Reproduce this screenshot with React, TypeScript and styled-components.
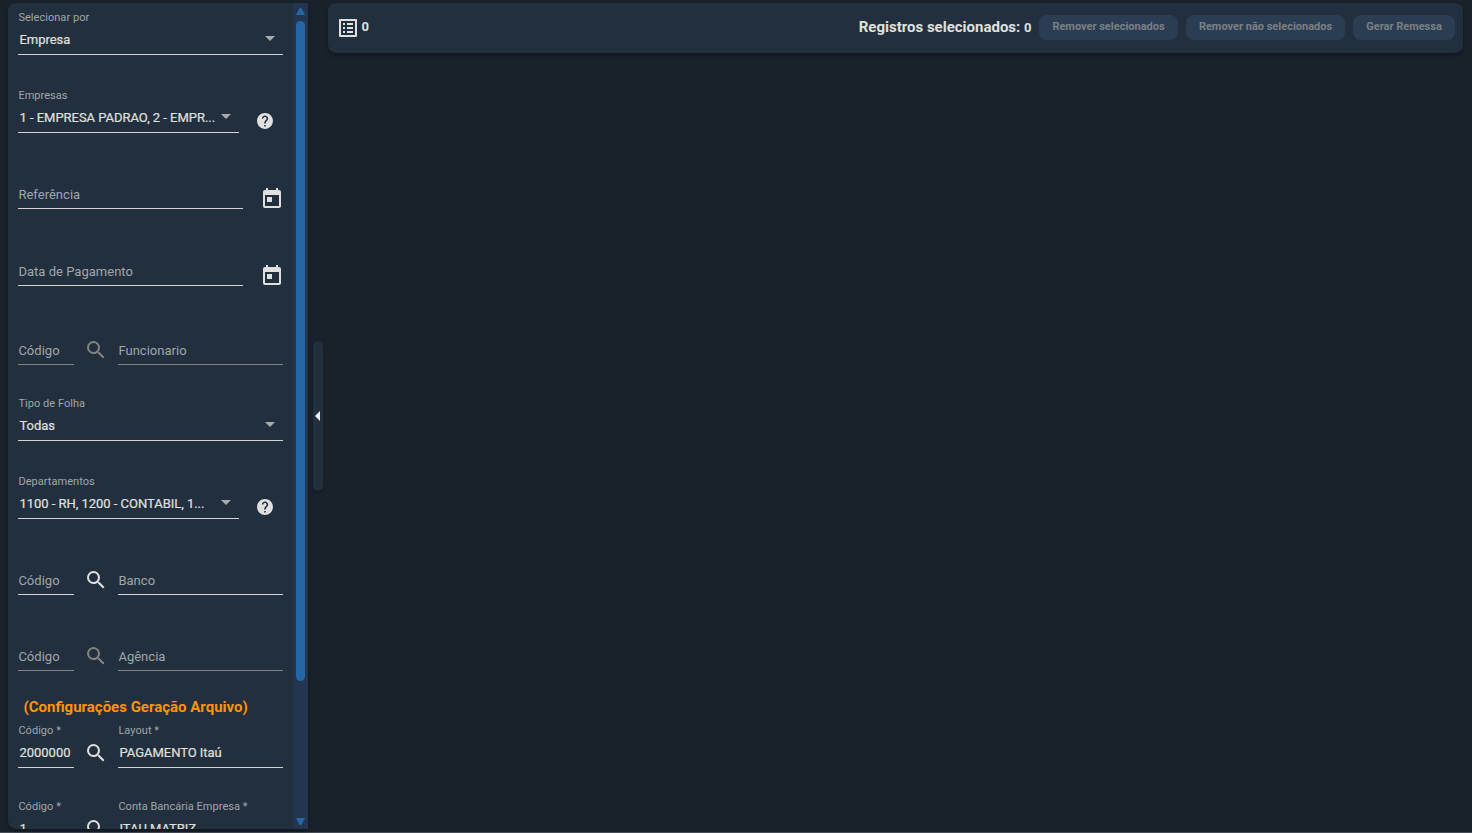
import React from "react";
import styled, { createGlobalStyle } from "styled-components";
import { MdHelp, MdListAlt, MdSearch, MdToday } from "react-icons/md";

const GlobalStyle = createGlobalStyle`
  * { box-sizing: border-box; }
  body {
    margin: 0;
    background: #19222b;
    font-family: Roboto, "Open Sans", sans-serif;
    overflow: hidden;
  }
`;

const Page = styled.div`
  display: flex;
  height: 833px;
  padding: 3px 9px 0 8px;
  border-bottom: 1px solid #464d55;
  color: #e0e0de;
`;

const Sidebar = styled.aside`
  display: flex;
  width: 300px;
  height: 826px;
  flex: none;
  overflow: hidden;
  border-radius: 8px 0 0 8px;
  background: #212f3f;
  box-shadow: 0 2px 4px rgba(0, 0, 0, 0.35);
`;

const Filters = styled.form`
  width: 285px;
  height: 826px;
  padding-left: 10px;
  overflow: hidden;
`;

const Row = styled.div<{ $height: number }>`
  display: flex;
  align-items: flex-end;
  height: ${(p) => p.$height}px;
`;

const FieldBox = styled.div<{ $width: number; $disabled?: boolean }>`
  display: flex;
  flex: none;
  flex-direction: column;
  justify-content: flex-end;
  width: ${(p) => p.$width}px;
  border-bottom: 1px solid ${(p) => (p.$disabled ? "#85837f" : "#d4d3d0")};
`;

const FloatingLabel = styled.label`
  height: 15px;
  padding-left: 0.4px;
  font-size: 11px;
  line-height: 15px;
  letter-spacing: 0.04px;
  color: #a3a6a9;
  white-space: nowrap;
`;

const EmptyLabel = styled.label`
  height: 27px;
  padding-left: 0.4px;
  font-size: 13px;
  line-height: 28px;
  color: #a3a6a9;
  letter-spacing: 0.02px;
  white-space: nowrap;
`;

const ValueLine = styled.div`
  display: flex;
  align-items: center;
  justify-content: space-between;
  height: 29px;
  padding: 0 8px 0 1.5px;
`;

const Value = styled.span`
  font-size: 13px;
  line-height: 29px;
  letter-spacing: -0.03px;
  white-space: nowrap;
  -webkit-text-stroke: 0.2px currentColor;
`;

const Caret = styled.i`
  width: 0;
  height: 0;
  margin-bottom: 3px;
  border: 5px solid transparent;
  border-top-color: #a9abab;
  border-bottom: 0;
`;

const IconSlot = styled.span<{ $left: number; $drop?: number; $dim?: boolean }>`
  display: flex;
  flex: none;
  margin: 0 0 ${(p) => -(p.$drop ?? 0)}px ${(p) => p.$left}px;
  color: ${(p) => (p.$dim ? "#828382" : "#e0e0de")};
`;

const LookupSlot = styled(IconSlot)`
  margin-right: 10px;
`;

const SectionTitle = styled.h2`
  height: 26px;
  margin: 0;
  padding: 21px 0 0 5.5px;
  color: #ff9408;
  font-size: 15px;
  font-weight: 700;
  line-height: 30px;
  white-space: nowrap;
`;

const ScrollTrack = styled.div`
  display: flex;
  flex-direction: column;
  align-items: center;
  width: 15px;
  height: 826px;
  padding: 5px 0 4px;
  background: #24364f;
`;

const ScrollArrow = styled.i<{ $down?: boolean }>`
  width: 9px;
  height: 7px;
  background: #2466a6;
  clip-path: ${(p) =>
    p.$down ? "polygon(0 0, 100% 0, 60% 100%, 40% 100%)" : "polygon(40% 0, 60% 0, 100% 100%, 0 100%)"};
`;

const ScrollThumb = styled.div`
  width: 9px;
  height: 660px;
  margin: 6px 0 auto;
  border-radius: 5px;
  background: #2466a6;
`;

const CollapseHandle = styled.button`
  display: flex;
  align-items: center;
  align-self: flex-start;
  flex: none;
  width: 10px;
  height: 150px;
  margin: 338px 5px 0;
  padding: 0 0 0 2px;
  border: 0;
  border-radius: 5px;
  background: #212f3f;
  box-shadow: 0 1px 2px rgba(0, 0, 0, 0.3);
`;

const CollapseArrow = styled.i`
  border: 5px solid transparent;
  border-right-color: #f0f0ee;
  border-left: 0;
`;

const Toolbar = styled.header`
  display: flex;
  flex: 1;
  align-items: center;
  height: 50px;
  padding: 0 8px;
  border-radius: 8px;
  background: #212f3f;
  box-shadow: 0 2px 4px rgba(0, 0, 0, 0.35);
`;

const Count = styled.b`
  margin: 0 auto 3px 1.5px;
  font-size: 13px;
`;

const Summary = styled.b`
  margin-right: -0.5px;
  padding-bottom: 2px;
  font-size: 15px;
  white-space: nowrap;
`;

const SummaryCount = styled.span`
  font-size: 13px;
`;

const ActionButton = styled.button<{ $width: number }>`
  flex: none;
  width: ${(p) => p.$width}px;
  height: 25px;
  margin: 0 0 1px 8px;
  padding: 0 0 2px;
  border: 0;
  border-radius: 8px;
  background: #2a3d53;
  color: #7b8085;
  font: 700 11px Roboto, sans-serif;
  white-space: nowrap;
`;

type FieldProps = {
  label: string;
  value?: string;
  width: number;
  select?: boolean;
  disabled?: boolean;
};

function Field({ label, value, width, select, disabled }: FieldProps) {
  return (
    <FieldBox $width={width} $disabled={disabled}>
      {value ? (
        <>
          <FloatingLabel>{label}</FloatingLabel>
          <ValueLine>
            <Value>{value}</Value>
            {select && <Caret />}
          </ValueLine>
        </>
      ) : (
        <EmptyLabel>{label}</EmptyLabel>
      )}
    </FieldBox>
  );
}

type LookupProps = {
  height: number;
  codeLabel?: string;
  code?: string;
  label: string;
  value?: string;
  disabled?: boolean;
};

function Lookup({ height, codeLabel = "Código", code, label, value, disabled }: LookupProps) {
  return (
    <Row $height={height}>
      <Field label={codeLabel} value={code} width={56} disabled={disabled} />
      <LookupSlot $left={10} $drop={-3} $dim={disabled}>
        <MdSearch size={24} />
      </LookupSlot>
      <Field label={label} value={value} width={165} disabled={disabled} />
    </Row>
  );
}

function MultiSelect({ label, value }: { label: string; value: string }) {
  return (
    <Row $height={78}>
      <Field label={label} value={value} width={221} select />
      <IconSlot $left={16} $drop={-2}>
        <MdHelp size={20} viewBox="-0.6 -0.6 25.2 25.2" />
      </IconSlot>
    </Row>
  );
}

function DateField({ label, height }: { label: string; height: number }) {
  return (
    <Row $height={height}>
      <Field label={label} width={225} />
      <IconSlot $left={17} $drop={2}>
        <MdToday size={24} />
      </IconSlot>
    </Row>
  );
}

export default function App() {
  return (
    <>
      <GlobalStyle />
      <Page>
        <Sidebar>
          <Filters>
            <Row $height={52}>
              <Field label="Selecionar por" value="Empresa" width={265} select />
            </Row>
            <MultiSelect label="Empresas" value="1 - EMPRESA PADRAO, 2 - EMPR..." />
            <DateField label="Referência" height={76} />
            <DateField label="Data de Pagamento" height={77} />
            <Lookup height={79} label="Funcionario" disabled />
            <Row $height={76}>
              <Field label="Tipo de Folha" value="Todas" width={265} select />
            </Row>
            <MultiSelect label="Departamentos" value="1100 - RH, 1200 - CONTABIL, 1..." />
            <Lookup height={76} label="Banco" />
            <Lookup height={76} label="Agência" disabled />
            <SectionTitle>(Configurações Geração Arquivo)</SectionTitle>
            <Lookup height={71} codeLabel="Código *" code="2000000" label="Layout *" value="PAGAMENTO Itaú" />
            <Lookup height={76} codeLabel="Código *" code="1" label="Conta Bancária Empresa *" value="ITAU MATRIZ" />
          </Filters>
          <ScrollTrack>
            <ScrollArrow />
            <ScrollThumb />
            <ScrollArrow $down />
          </ScrollTrack>
        </Sidebar>
        <CollapseHandle type="button" aria-label="Recolher filtros">
          <CollapseArrow />
        </CollapseHandle>
        <Toolbar>
          <MdListAlt size={24} />
          <Count>0</Count>
          <Summary>
            Registros selecionados: <SummaryCount>0</SummaryCount>
          </Summary>
          <ActionButton $width={139} disabled>Remover selecionados</ActionButton>
          <ActionButton $width={159} disabled>Remover não selecionados</ActionButton>
          <ActionButton $width={102} disabled>Gerar Remessa</ActionButton>
        </Toolbar>
      </Page>
    </>
  );
}
